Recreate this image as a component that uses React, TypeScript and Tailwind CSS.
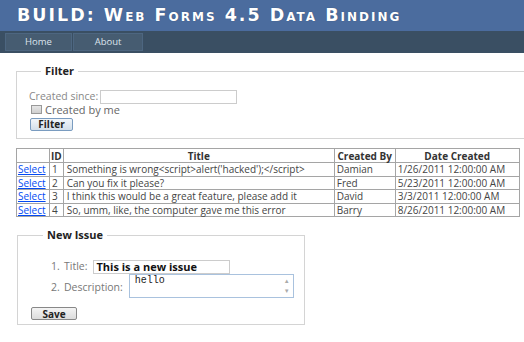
import React from "react";

// Issues shown in the grid
const issues = [
  { id: 1, title: "Something is wrong<script>alert('hacked');</script>", by: "Damian", date: "1/26/2011 12:00:00 AM" },
  { id: 2, title: "Can you fix it please?", by: "Fred", date: "5/23/2011 12:00:00 AM" },
  { id: 3, title: "I think this would be a great feature, please add it", by: "David", date: "3/3/2011 12:00:00 AM" },
  { id: 4, title: "So, umm, like, the computer gave me this error", by: "Barry", date: "8/26/2011 12:00:00 AM" },
];

const font = { fontFamily: '"Open Sans", "Noto Sans", Arial, sans-serif' };

const App = () => {
  return (
    <div className="w-[524px] h-[342px] overflow-hidden bg-white text-[#333]" style={font}>
      {/* Site header */}
      <div className="h-[31px] bg-[#4b6c9e] flex items-center pl-[17px]">
        <h1
          className="text-[17.5px] font-bold text-white [font-variant:small-caps] tracking-[2px] leading-none whitespace-nowrap [text-shadow:0_0_1px_rgba(0,0,0,0.3)]"
          style={{ fontFamily: '"DejaVu Sans", "Open Sans", sans-serif' }}
        >
          BUILD: Web Forms 4.5 Data Binding
        </h1>
      </div>

      {/* Menu bar */}
      <div className="h-[22px] bg-[#3a4f63] flex items-center pl-[5px] gap-[1px]">
        <div className="w-[67px] h-[18px] bg-[#465c71] border border-[#4d6680] flex items-center justify-center text-[9.5px] text-[#dde4ec]">
          Home
        </div>
        <div className="w-[70px] h-[18px] bg-[#465c71] border border-[#4d6680] flex items-center justify-center text-[9.5px] text-[#dde4ec]">
          About
        </div>
      </div>

      {/* Filter box */}
      <fieldset className="ml-[16px] mt-[11px] w-[530px] h-[75px] border border-[#d4d4d4] pl-[12px]">
        <legend className="ml-[12px] px-[4px] text-[11px] font-bold text-[#222] leading-[14px]">Filter</legend>
        <div className="mt-[11px] flex items-center gap-[2px]">
          <span className="text-[10.5px] text-[#888]">Created since:</span>
          <input className="w-[137px] h-[14px] border border-[#ccc] bg-white" />
        </div>
        <label className="flex items-center gap-[3px] -mt-[1px] ml-[2px] h-[12px]">
          <span className="w-[11px] h-[9px] border border-[#999] bg-gradient-to-b from-[#e6e6e6] to-[#cfcfcf]" />
          <span className="text-[11px] text-[#666] leading-[12px]">Created by me</span>
        </label>
        <button className="block mt-[2px] ml-[1px] w-[43px] h-[13px] border border-[#7a9cc0] rounded-[2px] bg-gradient-to-b from-[#f2f6fa] to-[#d3dfea] text-[10px] font-bold text-[#222] leading-none">
          Filter
        </button>
      </fieldset>

      {/* Issues grid */}
      <table className="ml-[16px] mt-[9px] border-collapse border border-[#8a8a8a] text-[10px] leading-[12px] text-[#444]">
        <thead>
          <tr className="h-[14px]">
            <th className="w-[33px] border border-[#a5a5a5]"></th>
            <th className="w-[13px] border border-[#a5a5a5] font-bold text-left px-[1px] text-[#333]">ID</th>
            <th className="w-[271px] border border-[#a5a5a5] font-bold text-center text-[#333]">Title</th>
            <th className="w-[61px] border border-[#a5a5a5] font-bold text-[#333] px-[1px]">Created By</th>
            <th className="w-[124px] border border-[#a5a5a5] font-bold text-center text-[#333]">Date Created</th>
          </tr>
        </thead>
        <tbody>
          {issues.map((issue) => (
            <tr key={issue.id} className="h-[13.5px]">
              <td className="border border-[#a5a5a5] px-[1px]">
                <a className="text-[#034af3] underline">Select</a>
              </td>
              <td className="border border-[#a5a5a5] px-[2px]">{issue.id}</td>
              <td className="border border-[#a5a5a5] px-[3px] whitespace-nowrap">{issue.title}</td>
              <td className="border border-[#a5a5a5] px-[2px]">{issue.by}</td>
              <td className="border border-[#a5a5a5] px-[2px] whitespace-nowrap">{issue.date}</td>
            </tr>
          ))}
        </tbody>
      </table>

      {/* New issue form */}
      <fieldset className="ml-[17px] mt-[11px] w-[288px] h-[97px] border border-[#d4d4d4] pl-[13px]">
        <legend className="ml-[12px] px-[4px] text-[11px] font-bold text-[#222] leading-[14px]">New Issue</legend>
        <ol className="mt-[18px] pl-[20px] text-[10.5px] text-[#777]">
          <li className="flex items-center h-[14px]">
            <span className="w-[13px]">1.</span>
            <span>Title:</span>
            <input
              defaultValue="This is a new issue"
              className="ml-[6px] w-[137px] h-[14px] border border-[#ccc] px-[2px] text-[11px] font-bold text-[#111]"
              style={font}
            />
          </li>
          <li className="flex items-end h-[24px]">
            <span className="w-[13px] mb-[2px]">2.</span>
            <span className="mb-[2px]">Description:</span>
            <div className="ml-[6px] w-[165px] h-[24px] border border-[#a9c2de] flex">
              <span className="flex-1 pl-[5px] pt-[1px] text-[10px] leading-[10px] text-[#222]" style={{ fontFamily: '"Liberation Mono", monospace' }}>
                hello
              </span>
              <div className="w-[12px] flex flex-col items-center justify-between py-[3px] text-[6px] leading-none text-[#aaa]">
                <span>▲</span>
                <span>▼</span>
              </div>
            </div>
          </li>
        </ol>
        <button className="block mt-[9px] w-[46px] h-[13px] border border-[#888] rounded-[2px] bg-gradient-to-b from-[#f4f4f4] to-[#dcdcdc] text-[10px] font-bold text-[#222] leading-none">
          Save
        </button>
      </fieldset>
    </div>
  );
};

export default App;
